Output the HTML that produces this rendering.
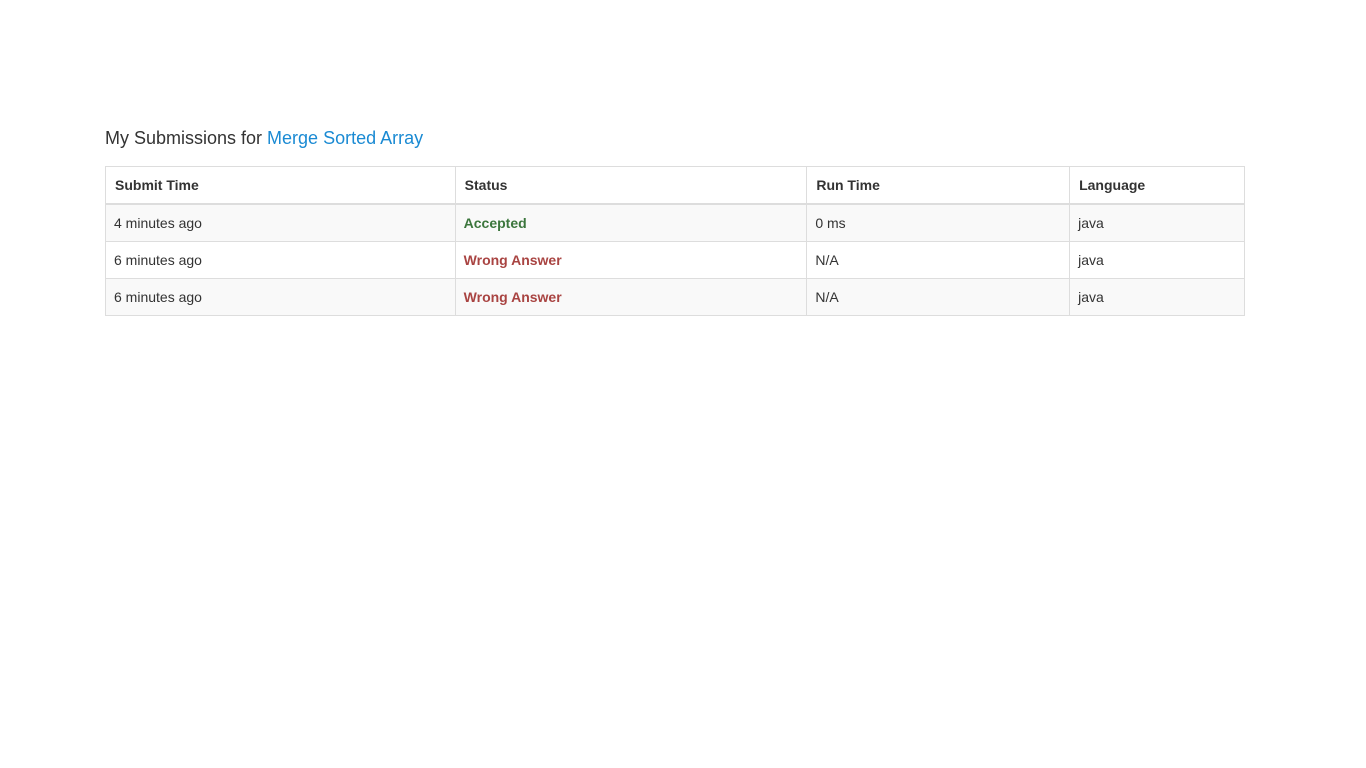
<!DOCTYPE html>
<html><head><meta charset="utf-8"><style>
body{margin:0;background:#fff;font-family:"Liberation Sans",Arial,sans-serif;color:#333;}
.t{position:absolute;left:105px;top:138px;font-size:18px;line-height:1;transform:translateY(-9px);}
.t a{color:#1a8ad3;text-decoration:none}
table{position:absolute;left:105px;top:166px;border-collapse:collapse;font-size:14px;width:1140px}
td,th{border:1px solid #ddd;padding:0 8px;text-align:left;height:36px;vertical-align:middle}
th{font-weight:bold;border-bottom:2px solid #ddd;height:36px;padding-left:9px}
tr.o td{background:#f9f9f9}
.g{color:#3c763d;font-weight:bold}.r{color:#a94442;font-weight:bold}
</style></head><body>
<div class="t">My Submissions for <a>Merge Sorted Array</a></div>
<table>
<colgroup><col style="width:350px"><col style="width:352px"><col style="width:263px"><col style="width:175px"></colgroup>
<tr><th>Submit Time</th><th>Status</th><th>Run Time</th><th>Language</th></tr>
<tr class="o"><td>4 minutes ago</td><td class="g">Accepted</td><td>0 ms</td><td>java</td></tr>
<tr><td>6 minutes ago</td><td class="r">Wrong Answer</td><td>N/A</td><td>java</td></tr>
<tr class="o"><td>6 minutes ago</td><td class="r">Wrong Answer</td><td>N/A</td><td>java</td></tr>
</table>
</body></html>
